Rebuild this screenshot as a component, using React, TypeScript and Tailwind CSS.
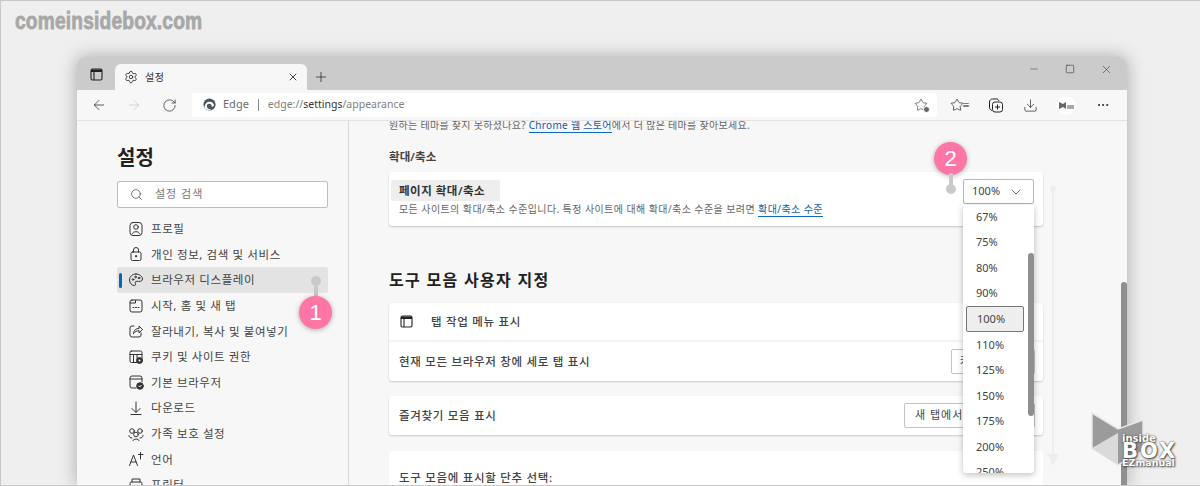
import React from "react";
import { ArrowLeft, ArrowRight, RotateCw, X, Plus, Minus, Square, Search, Download, Settings, ChevronDown, MoreHorizontal, Star } from "lucide-react";

const FONT = { fontFamily: '"Noto Sans", "Noto Sans CJK KR", sans-serif' };

const I = ({ children }: { children: React.ReactNode }) => (
  <svg width="16" height="16" viewBox="0 0 16 16" fill="none" stroke="#333" strokeWidth="1" strokeLinecap="round" strokeLinejoin="round">{children}</svg>
);

const TabIcon = () => (
  <svg width="13" height="13" viewBox="0 0 13 13" fill="none" stroke="#222" strokeWidth="1.1">
    <rect x="1" y="1" width="11" height="11" rx="1.5" />
    <path d="M1 3.5h11M4 3.5V12" />
    <path d="M1 1.5h11v2H1z" fill="#222" stroke="none" />
  </svg>
);

const items: [string, React.ReactNode][] = [
  ["프로필", <I><rect x="2" y="1.5" width="12" height="13" rx="3" /><circle cx="8" cy="6" r="2.3" /><path d="M4.5 12.5c0-2.5 7-2.5 7 0" /></I>],
  ["개인 정보, 검색 및 서비스", <I><rect x="3" y="6" width="10" height="8.5" rx="1.5" /><path d="M5.5 6V4a2.5 2.5 0 0 1 5 0v2" /><circle cx="8" cy="10.2" r=".7" fill="#333" /></I>],
  ["브라우저 디스플레이", <I><path d="M8 2C4 2 1.500 4.800 1.500 8c0 3 2.300 5.500 4.800 5.500 1.600 0 1.400-1.500 1-2.400-.5-1 .3-2 1.500-1.800 2 .3 5.700.4 5.700-2.300C14.500 4.500 11.500 2 8 2Z" /><circle cx="5" cy="7.500" r=".8" /><circle cx="7.500" cy="5" r=".8" /><circle cx="11" cy="6" r=".8" /></I>],
  ["시작, 홈 및 새 탭", <I><rect x="2" y="2" width="12" height="12" rx="2" /><path d="M2 5h5.500V2.500" /><path d="M5 9.500h6" strokeDasharray="1 1.500" /></I>],
  ["잘라내기, 복사 및 붙여넣기", <I><path d="M6 3H4a2 2 0 0 0-2 2v7a2 2 0 0 0 2 2h7a2 2 0 0 0 2-2v-2" /><path d="M5.500 10.500c.3-3.500 2.500-5 5.500-5V3l3.500 3.500L11 10V7.700c-2.200 0-4 .8-5.500 2.800Z" /></I>],
  ["쿠키 및 사이트 권한", <I><rect x="2" y="2" width="12" height="11.500" rx="1.500" /><path d="M2 5.500h12M5.500 5.500v8M9 5.500V9" /><circle cx="11.500" cy="11.500" r="3" fill="#333" /><circle cx="11.500" cy="11.500" r="1" fill="#fff" stroke="none" /></I>],
  ["기본 브라우저", <I><path d="M8 14H4a2 2 0 0 1-2-2V4a2 2 0 0 1 2-2h8a2 2 0 0 1 2 2v4M2 5h12" /><circle cx="12" cy="12" r="3.300" fill="#333" /><path d="m10.700 12 1 1 1.600-1.800" stroke="#fff" /></I>],
  ["다운로드", <I><path d="M8 2v10M4 8.500 8 12.500l4-4M3 14.500h10" /></I>],
  ["가족 보호 설정", <I><circle cx="4" cy="5" r="2.300" /><circle cx="12" cy="5" r="2.300" /><circle cx="8" cy="8.500" r="2.300" /><path d="M1 9.500c0 2 1.500 2.500 3 2.500M15 9.500c0 2-1.500 2.500-3 2.500M5 14.500c0-2 6-2 6 0" /></I>],
  ["언어", <I><path d="m1.500 14.500 4-10.500 4 10.500M3 11h5M10.500 3.500h4.500M12.500 1.500V8" /></I>],
  ["프린터", <I><path d="M4 5V2h8v3M4 12H2V6.500A1.500 1.500 0 0 1 3.500 5h9A1.500 1.500 0 0 1 14 6.500V12h-2" /><rect x="4" y="10" width="8" height="5" /></I>],
];

const zoomLevels = ["67%", "75%", "80%", "90%", "100%", "110%", "125%", "150%", "175%", "200%", "250%"];

const Callout = ({ n }: { n: string }) => (
  <div className="w-[33px] h-[33px] rounded-full bg-[#ff76a6] text-white text-[22px] flex items-center justify-center shadow-[0_1px_5px_rgba(0,0,0,0.3)]" style={{ fontFamily: '"Liberation Sans", sans-serif' }}>{n}</div>
);

export default function App() {
  return (
    <div className="relative w-[1200px] h-[486px] overflow-hidden bg-[#efefef] border border-[#c8c8c8] border-r-0" style={FONT}>
      <div className="pl-[14px] pt-[7px] h-[56px] box-border">
        <div className="inline-block origin-left scale-x-[0.8] text-[#a8a8a8] text-[24px] font-bold leading-[26px] tracking-[0.2px] [-webkit-text-stroke:0.8px_#a8a8a8]" style={{ fontFamily: '"Liberation Sans", sans-serif' }}>comeinsidebox.com</div>
      </div>

      <div className="ml-[76px] w-[1050px] h-[429px] rounded-t-lg overflow-hidden flex flex-col shadow-[0_0_18px_rgba(0,0,0,0.3)] bg-[#f7f7f7]">
        {/* Title bar */}
        <div className="h-[33px] bg-[#cbcbcb] flex items-end shrink-0">
          <div className="w-[38px] h-[33px] flex items-center justify-center pt-[2px]"><TabIcon /></div>
          <div className="w-[192px] h-[26px] bg-[#f7f7f7] rounded-t-md flex items-center pl-[9px] pr-[8px]">
            <Settings size={14} strokeWidth={1.4} color="#222" />
            <span className="ml-[7px] text-[10px] text-[#333] tracking-[0.5px]">설정</span>
            <X size={12} strokeWidth={1.7} color="#222" className="ml-auto" />
          </div>
          <div className="w-[28px] h-[26px] flex items-center justify-center"><Plus size={16} strokeWidth={1.1} color="#222" /></div>
          <div className="ml-auto h-[33px] flex items-center text-[#333] pb-[9px]">
            <Minus size={12} strokeWidth={1.2} color="#555" className="mr-[25px]" />
            <Square size={10} strokeWidth={1.4} color="#333" className="mr-[25px]" />
            <X size={13} strokeWidth={1.1} color="#333" className="mr-[14px]" />
          </div>
        </div>

        {/* Toolbar */}
        <div className="h-[31px] bg-[#f7f7f7] border-b border-[#e2e2e2] flex items-center shrink-0 pl-[14px]">
          <ArrowLeft size={16} strokeWidth={1.1} color="#222" />
          <ArrowRight size={16} strokeWidth={1.1} color="#c4c4c4" className="ml-[19px]" />
          <RotateCw size={15} strokeWidth={1.1} color="#222" className="ml-[20px]" />
          <div className="ml-[15px] w-[745px] h-[24px] bg-white rounded-[3px] flex items-center pl-[11px] pr-[9px] mb-px">
            <svg width="13" height="13" viewBox="0 0 16 16"><circle cx="8" cy="8" r="7.500" fill="#4a5660" /><path d="M2 10.500C2.500 6.500 5 4.500 8 4.500c3 0 5.500 2 5.500 4.500 0 1.500-2 2-3 1.500.8-2-1-3.500-3-3.500-2 0-3.500 2-2.500 4.500.8 2 3.500 3 6 2-2 1.500-5 1.500-7 .3-1.500-.8-2.200-1.800-2.500-3.300Z" fill="#fff" /></svg>
            <span className="ml-[7px] text-[11px] text-[#6b6b6b]">Edge</span>
            <span className="ml-[9px] w-px h-[12px] bg-[#888]" />
            <span className="ml-[9px] text-[10.500px] text-[#808080]">edge://<span className="text-[#333]">settings</span>/appearance</span>
            <span className="ml-auto relative flex">
              <Star size={14} strokeWidth={1.1} color="#333" />
              <span className="absolute right-[-2px] bottom-[-1px] w-[7px] h-[7px] rounded-full bg-[#666] border border-white" />
            </span>
          </div>
          <div className="ml-[13px] relative flex items-center">
            <Star size={14} strokeWidth={1.2} color="#222" />
            <span className="text-[8px] leading-none text-[#222] ml-[-2px]">≡</span>
          </div>
          <svg className="ml-[18px]" width="16" height="16" viewBox="0 0 16 16" fill="none" stroke="#222" strokeWidth="1"><path d="M4 13.500c-1.500-.5-2.500-1.500-2.500-3.500V5c0-2 1.500-3 3-3h4c1.200 0 2 .7 2.300 2" /><rect x="4.500" y="5" width="10" height="10" rx="2.500" fill="#f7f7f7" /><path d="M9.500 7.500v5M7 10h5" /></svg>
          <Download size={15} strokeWidth={1.1} color="#222" className="ml-[19px]" />
          <div className="ml-[19px] w-[19px] h-[19px] rounded-full bg-white flex items-center justify-center">
            <svg width="15" height="9" viewBox="0 0 15 9"><path d="M0 1l4 2 3-2v7L4 6 0 8Z" fill="#666" /><rect x="8" y="4" width="7" height="4" fill="#aaa" /></svg>
          </div>
          <MoreHorizontal size={14} strokeWidth={1.6} color="#222" className="ml-[20px]" />
        </div>

        {/* Body */}
        <div className="flex-1 min-h-0 flex relative">
          <aside className="w-[272px] shrink-0 border-r border-[#d6d6d6] pl-[40px] pr-[20px] overflow-hidden box-border">
            <div className="pt-[22px] text-[20px] font-bold leading-[30px] text-[#222]">설정</div>
            <div className="mt-[8px] h-[27px] bg-white border border-[#bdbdbd] rounded-[2px] flex items-center pl-[12px]">
              <Search size={13} strokeWidth={1.2} color="#333" />
              <span className="ml-[12px] text-[11px] text-[#777] tracking-[1px]">설정 검색</span>
            </div>
            <div className="mt-[8px]">
              {items.map(([label, icon], i) => (
                <div key={label} className={`relative h-[25.6px] flex items-center rounded-[2px] pl-[11px] ${i === 2 ? "bg-[#e3e3e3]" : ""}`}>
                  {i === 2 && <span className="absolute left-[2px] top-[6px] w-[3px] h-[15px] bg-[#0067c0] rounded-sm" />}
                  <span className="w-[16px] h-[16px] flex shrink-0">{icon}</span>
                  <span className="ml-[7px] text-[11.500px] tracking-[0.6px] text-[#444] whitespace-nowrap">{label}</span>
                </div>
              ))}
            </div>
          </aside>

          <main className="flex-1 min-w-0 pl-[40px] overflow-hidden">
            <div className="text-[10px] leading-[10px] mt-[-1px] text-[#666] tracking-[0.3px] whitespace-nowrap">
              원하는 테마를 찾지 못하셨나요? <span className="text-[#0f5fa8] border-b border-[#0f6cbd]">Chrome 웹 스토어</span>에서 더 많은 테마를 찾아보세요.
            </div>
            <div className="mt-[19px] text-[11.500px] leading-[16px] font-semibold text-[#444] tracking-[0.1px]">확대/축소</div>
            <div className="mt-[7px] w-[654px] h-[54px] bg-white rounded-[3px] shadow-[0_1px_2px_rgba(0,0,0,0.2)] relative box-border pt-[8px] pl-[2px]">
              <div className="w-[109px] h-[21px] bg-[#eeeeee] rounded-[2px] flex items-center pl-[8px] text-[11.500px] font-semibold text-[#333] tracking-[0.5px] whitespace-nowrap">페이지 확대/축소</div>
              <div className="mt-[2px] pl-[8px] text-[10px] leading-[13px] text-[#666] tracking-[0.42px] whitespace-nowrap">
                모든 사이트의 확대/축소 수준입니다. 특정 사이트에 대해 확대/축소 수준을 보려면 <span className="text-[#0f5fa8] border-b border-[#0f6cbd]">확대/축소 수준</span>
              </div>
              <div className="absolute left-[574px] top-[7px] w-[71px] h-[25px] bg-white border border-[#b5b5b5] rounded-[2px] flex items-center pl-[8px] text-[11px] text-[#444]">
                100%
                <ChevronDown size={16} strokeWidth={1.1} color="#444" className="ml-[8px]" />
              </div>
            </div>

            <div className="mt-[43px] text-[16px] leading-[22px] font-semibold text-[#222] tracking-[1.3px]">도구 모음 사용자 지정</div>

            <div className="mt-[12px] w-[654px] h-[78px] bg-white rounded-[3px] shadow-[0_1px_2px_rgba(0,0,0,0.2)] flex flex-col">
              <div className="h-[39px] flex items-center pl-[11px] border-b-2 border-[#f3f3f3] box-border">
                <TabIcon />
                <span className="ml-[18px] text-[11.500px] font-medium text-[#444] tracking-[0.7px]">탭 작업 메뉴 표시</span>
              </div>
              <div className="flex-1 flex items-center pl-[10px]">
                <span className="text-[11.500px] font-medium text-[#444] tracking-[0.7px]">현재 모든 브라우저 창에 세로 탭 표시</span>
                <div className="ml-auto mr-[8px] w-[84px] h-[25px] border border-[#c4c4c4] rounded-[2px] flex items-center pl-[8px] text-[11px] text-[#444]">켜기</div>
              </div>
            </div>

            <div className="mt-[15px] w-[654px] h-[39px] bg-white rounded-[3px] shadow-[0_1px_2px_rgba(0,0,0,0.2)] flex items-center pl-[10px]">
              <span className="text-[11.500px] font-medium text-[#444] tracking-[0.7px]">즐겨찾기 모음 표시</span>
              <div className="ml-auto mr-[8px] w-[131px] h-[25px] border border-[#c4c4c4] rounded-[2px] flex items-center pl-[10px] text-[11px] text-[#444] tracking-[1px]">새 탭에서만</div>
            </div>

            <div className="mt-[16px] w-[654px] h-[60px] bg-white rounded-t-[3px] pl-[10px] pt-[13px]">
              <span className="text-[11.500px] font-medium text-[#444] tracking-[0.7px]">도구 모음에 표시할 단추 선택:</span>
            </div>
          </main>

          {/* Window scrollbar */}
          <div className="absolute right-0 bottom-0 w-[6px] h-[204px] bg-[#8f8f8f] rounded-t-[3px]" />

          {/* Decorative arrow */}
          <div className="absolute left-[970px] top-[65px] flex flex-col items-center">
            <span className="w-[6px] h-[6px] rounded-full bg-[#ededed]" />
            <span className="w-[2px] h-[262px] bg-[#ededed]" />
            <span className="w-0 h-0 border-x-[6px] border-x-transparent border-t-[12px] border-t-[#ededed]" />
          </div>

          {/* Zoom dropdown */}
          <div className="absolute left-[886px] top-[84px] w-[71px] h-[268px] bg-white rounded-b-[3px] shadow-[0_2px_6px_rgba(0,0,0,0.25)] overflow-hidden">
            <div className="mt-[-1px]">
              {zoomLevels.map((z) => (
                <div key={z} className={`h-[25.6px] flex items-center text-[11px] text-[#444] w-[58px] ml-[3px] box-border rounded-[2px] pl-[10px] ${z === "100%" ? "bg-[#eeeeee] border-[1.5px] border-[#777]" : ""}`}>{z}</div>
              ))}
            </div>
            <div className="absolute right-0 top-[48px] w-[6px] h-[163px] bg-[#8f8f8f] rounded-[3px]" />
          </div>

          {/* Callout 1 */}
          <div className="absolute left-[222px] top-[155px] flex flex-col items-center">
            <span className="w-[10px] h-[10px] rounded-full bg-[#c9c9c9]" />
            <span className="w-[4px] h-[14px] bg-[#c9c9c9]" />
            <div className="mt-[-4px]"><Callout n="1" /></div>
          </div>

          {/* Callout 2 */}
          <div className="absolute left-[857px] top-[21px] flex flex-col items-center">
            <Callout n="2" />
            <span className="w-[4px] h-[14px] bg-[#c9c9c9] mt-[-2px]" />
            <span className="w-[10px] h-[10px] rounded-full bg-[#c9c9c9] mt-[-3px]" />
          </div>
        </div>
      </div>

      {/* Watermark */}
      <div className="absolute left-[1090px] top-[410px] w-[92px] h-[60px]">
        <svg width="56" height="58" viewBox="0 0 56 58" className="absolute left-0 top-0">
          <path d="M1 2 27 18 52 9V40L27 54 1 37Z" fill="#9b9b9b" stroke="#e8e8e8" strokeWidth="1.500" />
          <path d="M1 37 27 22V54Z" fill="#dadada" />
        </svg>
        <div className="absolute left-[31px] top-[23px] text-white font-bold [text-shadow:0_0_2px_#444,1px_1px_2px_#444]" style={{ fontFamily: '"DejaVu Sans", sans-serif' }}>
          <div className="text-[10px] leading-[9px]">inside</div>
          <div className="text-[21px] leading-[16px] tracking-[2px]">BOX</div>
          <div className="text-[9.500px] leading-[8px]">EZmanual</div>
        </div>
      </div>
    </div>
  );
}
